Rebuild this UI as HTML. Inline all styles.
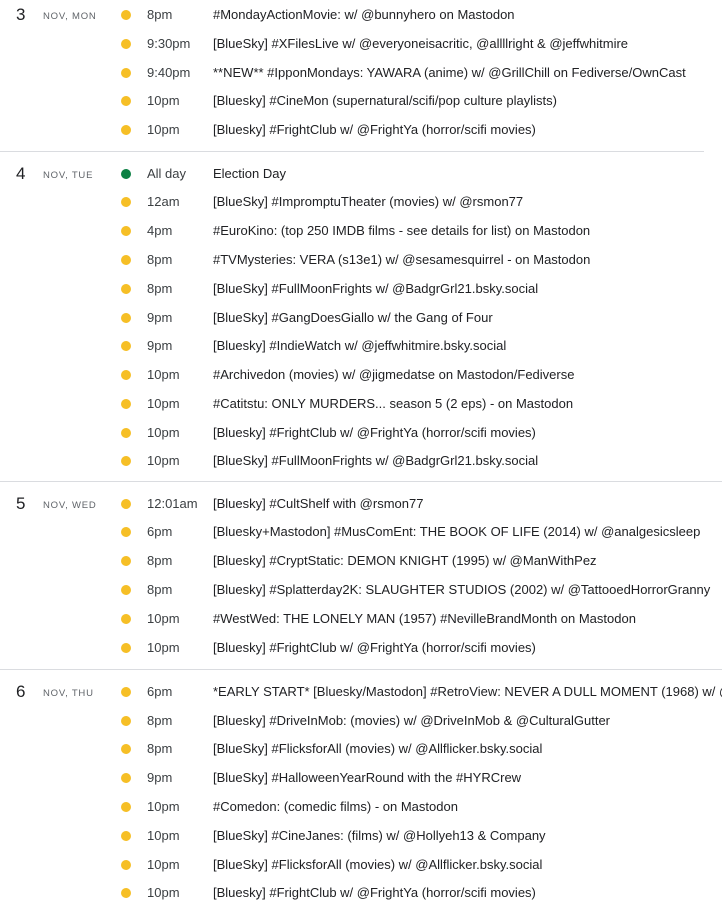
<!DOCTYPE html>
<html style="overflow:hidden"><head><meta charset="utf-8"><style>
html,body{overflow:hidden}
body{margin:0;width:722px;height:916px;background:#fff;position:relative;font-family:"Liberation Sans",Arial,sans-serif;color:#3c4043}
.r{position:absolute;left:0;height:28px;line-height:28px;font-size:13px;white-space:nowrap;width:722px;overflow:hidden;margin-top:1px}
.d{position:absolute;left:121px;top:9px;width:10px;height:10px;border-radius:50%;background:#f6bf26}
.g{background:#0b8043}
.t{position:absolute;left:147px}
.n{position:absolute;left:213px;color:#202124}
.day{position:absolute;left:16px;font-size:17px;line-height:28px;color:#202124;margin-top:1px}
.lab{position:absolute;left:43px;font-size:9.5px;letter-spacing:0.8px;line-height:28px;color:#5f6368;margin-top:1px}
.sep{position:absolute;left:0;width:722px;height:1px;background:#dadce0}
</style></head><body>
<div class="day" style="top:0">3</div><div class="lab" style="top:2px">NOV, MON</div>
<div class="r" style="top:0"><i class="d"></i><span class="t">8pm</span><span class="n">#MondayActionMovie: w/ @bunnyhero on Mastodon</span></div>
<div class="r" style="top:29px"><i class="d"></i><span class="t">9:30pm</span><span class="n">[BlueSky] #XFilesLive w/ @everyoneisacritic, @allllright &amp; @jeffwhitmire</span></div>
<div class="r" style="top:58px"><i class="d"></i><span class="t">9:40pm</span><span class="n">**NEW** #IpponMondays: YAWARA (anime) w/ @GrillChill on Fediverse/OwnCast</span></div>
<div class="r" style="top:86px"><i class="d"></i><span class="t">10pm</span><span class="n">[Bluesky] #CineMon (supernatural/scifi/pop culture playlists)</span></div>
<div class="r" style="top:115px"><i class="d"></i><span class="t">10pm</span><span class="n">[Bluesky] #FrightClub w/ @FrightYa (horror/scifi movies)</span></div>
<div class="sep" style="top:151px;width:704px"></div>

<div class="day" style="top:159px">4</div><div class="lab" style="top:161px">NOV, TUE</div>
<div class="r" style="top:159px"><i class="d g"></i><span class="t">All day</span><span class="n">Election Day</span></div>
<div class="r" style="top:187px"><i class="d"></i><span class="t">12am</span><span class="n">[BlueSky] #ImpromptuTheater (movies) w/ @rsmon77</span></div>
<div class="r" style="top:216px"><i class="d"></i><span class="t">4pm</span><span class="n">#EuroKino: (top 250 IMDB films - see details for list) on Mastodon</span></div>
<div class="r" style="top:245px"><i class="d"></i><span class="t">8pm</span><span class="n">#TVMysteries: VERA (s13e1) w/ @sesamesquirrel - on Mastodon</span></div>
<div class="r" style="top:274px"><i class="d"></i><span class="t">8pm</span><span class="n">[BlueSky] #FullMoonFrights w/ @BadgrGrl21.bsky.social</span></div>
<div class="r" style="top:303px"><i class="d"></i><span class="t">9pm</span><span class="n">[BlueSky] #GangDoesGiallo w/ the Gang of Four</span></div>
<div class="r" style="top:331px"><i class="d"></i><span class="t">9pm</span><span class="n">[Bluesky] #IndieWatch w/ @jeffwhitmire.bsky.social</span></div>
<div class="r" style="top:360px"><i class="d"></i><span class="t">10pm</span><span class="n">#Archivedon (movies) w/ @jigmedatse on Mastodon/Fediverse</span></div>
<div class="r" style="top:389px"><i class="d"></i><span class="t">10pm</span><span class="n">#Catitstu: ONLY MURDERS... season 5 (2 eps) - on Mastodon</span></div>
<div class="r" style="top:418px"><i class="d"></i><span class="t">10pm</span><span class="n">[Bluesky] #FrightClub w/ @FrightYa (horror/scifi movies)</span></div>
<div class="r" style="top:446px"><i class="d"></i><span class="t">10pm</span><span class="n">[BlueSky] #FullMoonFrights w/ @BadgrGrl21.bsky.social</span></div>
<div class="sep" style="top:481px"></div>

<div class="day" style="top:489px">5</div><div class="lab" style="top:491px">NOV, WED</div>
<div class="r" style="top:489px"><i class="d"></i><span class="t">12:01am</span><span class="n">[Bluesky] #CultShelf with @rsmon77</span></div>
<div class="r" style="top:517px"><i class="d"></i><span class="t">6pm</span><span class="n">[Bluesky+Mastodon] #MusComEnt: THE BOOK OF LIFE (2014) w/ @analgesicsleep</span></div>
<div class="r" style="top:546px"><i class="d"></i><span class="t">8pm</span><span class="n">[Bluesky] #CryptStatic: DEMON KNIGHT (1995) w/ @ManWithPez</span></div>
<div class="r" style="top:575px"><i class="d"></i><span class="t">8pm</span><span class="n">[Bluesky] #Splatterday2K: SLAUGHTER STUDIOS (2002) w/ @TattooedHorrorGranny</span></div>
<div class="r" style="top:604px"><i class="d"></i><span class="t">10pm</span><span class="n">#WestWed: THE LONELY MAN (1957) #NevilleBrandMonth on Mastodon</span></div>
<div class="r" style="top:633px"><i class="d"></i><span class="t">10pm</span><span class="n">[Bluesky] #FrightClub w/ @FrightYa (horror/scifi movies)</span></div>
<div class="sep" style="top:669px"></div>

<div class="day" style="top:677px">6</div><div class="lab" style="top:679px">NOV, THU</div>
<div class="r" style="top:677px"><i class="d"></i><span class="t">6pm</span><span class="n">*EARLY START* [Bluesky/Mastodon] #RetroView: NEVER A DULL MOMENT (1968) w/ @analgesicsleep</span></div>
<div class="r" style="top:706px"><i class="d"></i><span class="t">8pm</span><span class="n">[Bluesky] #DriveInMob: (movies) w/ @DriveInMob &amp; @CulturalGutter</span></div>
<div class="r" style="top:734px"><i class="d"></i><span class="t">8pm</span><span class="n">[BlueSky] #FlicksforAll (movies) w/ @Allflicker.bsky.social</span></div>
<div class="r" style="top:763px"><i class="d"></i><span class="t">9pm</span><span class="n">[BlueSky] #HalloweenYearRound with the #HYRCrew</span></div>
<div class="r" style="top:792px"><i class="d"></i><span class="t">10pm</span><span class="n">#Comedon: (comedic films) - on Mastodon</span></div>
<div class="r" style="top:821px"><i class="d"></i><span class="t">10pm</span><span class="n">[BlueSky] #CineJanes: (films) w/ @Hollyeh13 &amp; Company</span></div>
<div class="r" style="top:850px"><i class="d"></i><span class="t">10pm</span><span class="n">[BlueSky] #FlicksforAll (movies) w/ @Allflicker.bsky.social</span></div>
<div class="r" style="top:878px"><i class="d"></i><span class="t">10pm</span><span class="n">[Bluesky] #FrightClub w/ @FrightYa (horror/scifi movies)</span></div>
</body></html>
